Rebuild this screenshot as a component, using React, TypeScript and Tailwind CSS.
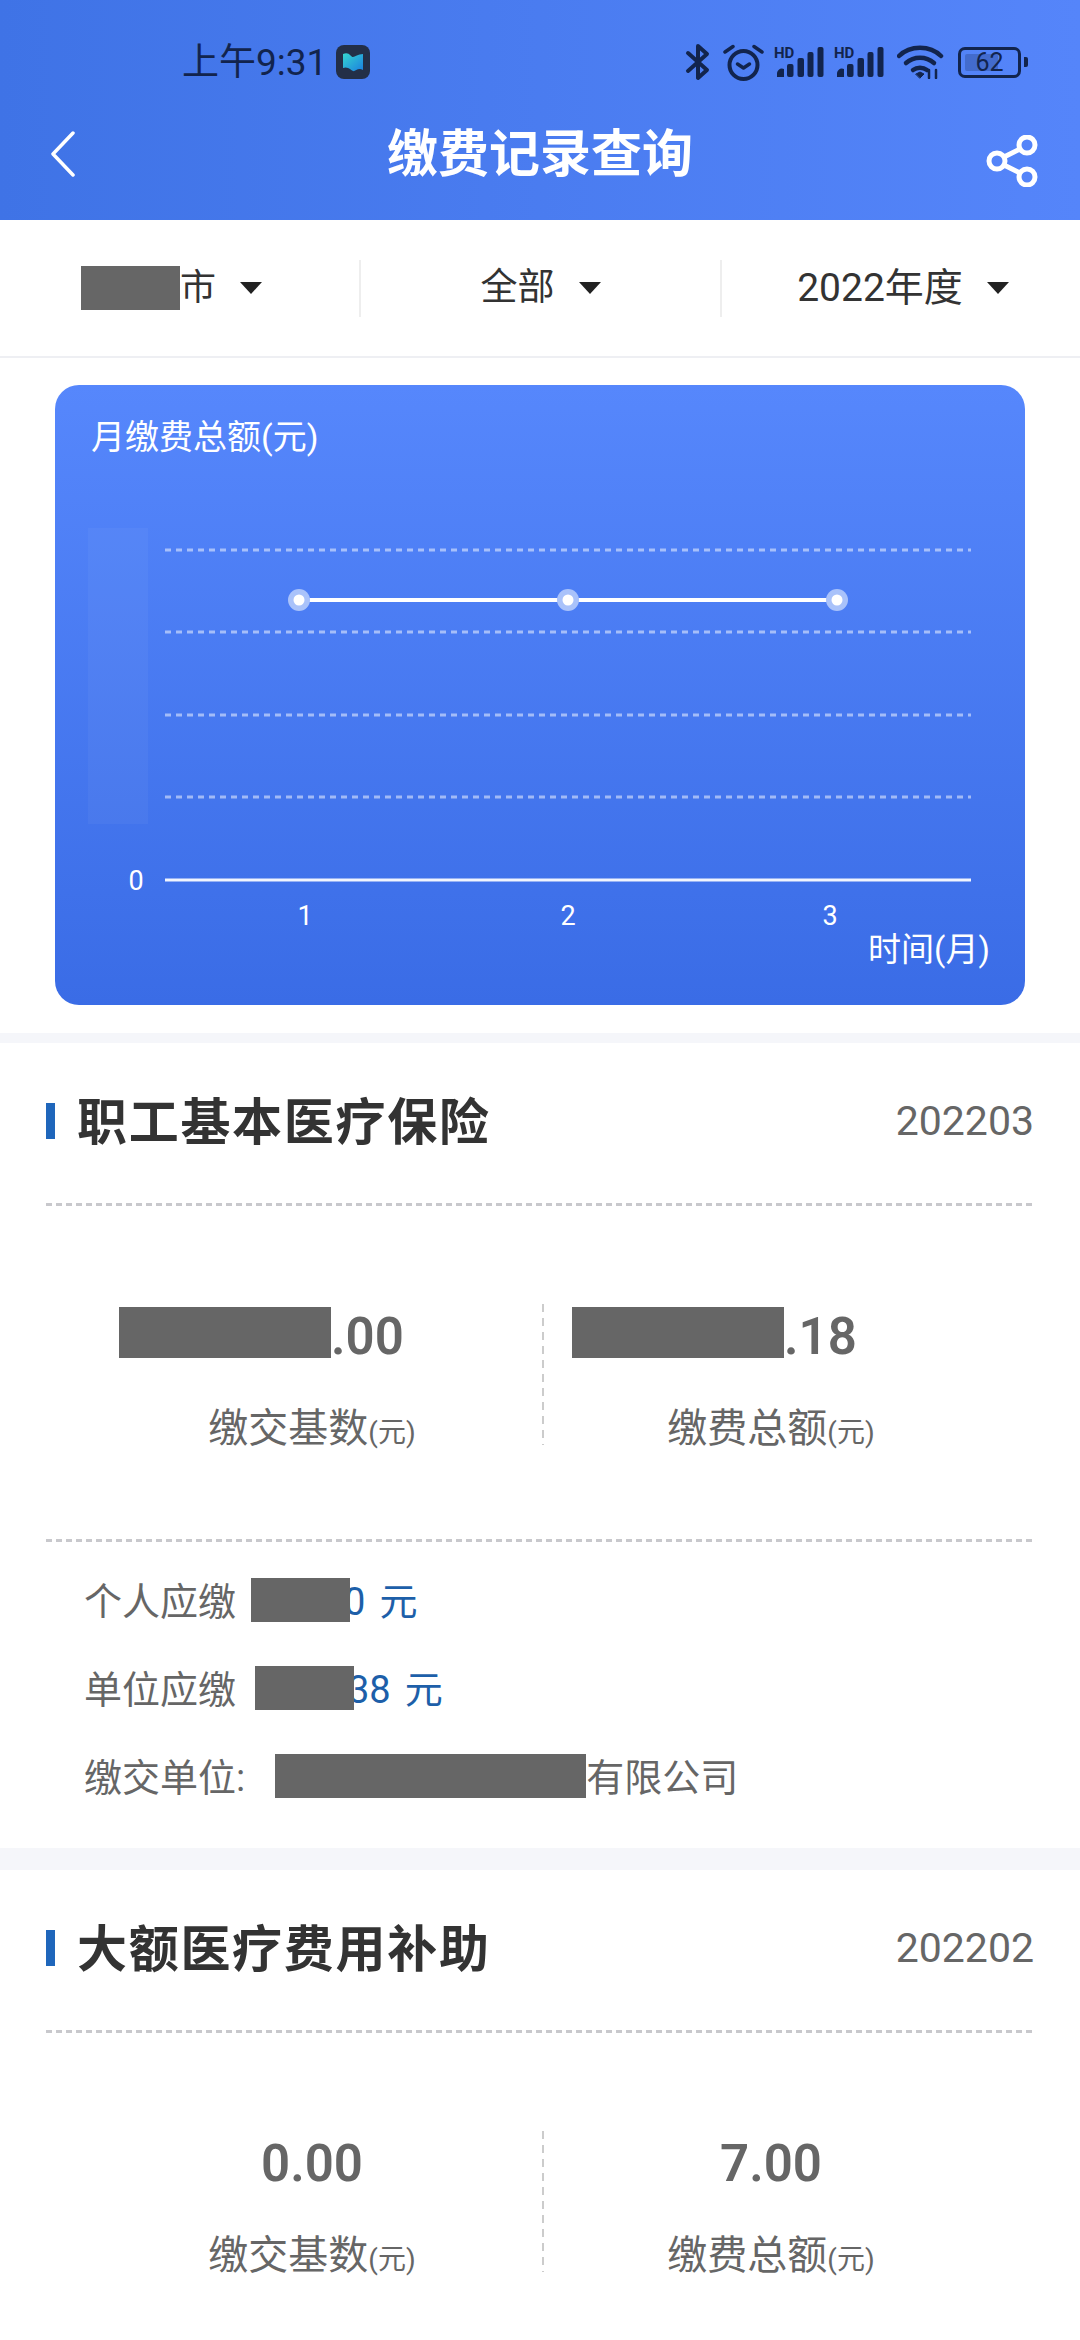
const font = "font-['Roboto','Noto_Sans_CJK_SC',sans-serif]";

function Mask({ className }: { className: string }) {
  return <span className={`relative z-10 block shrink-0 bg-[#666666] ${className}`} />;
}

function DashedLine() {
  return <div className="mx-[46px] h-[3px] w-[989px] bg-[repeating-linear-gradient(to_right,#c8c8cc_0_6px,transparent_6px_10px)]" />;
}

function StatusIcons() {
  const ink = '#12244d';
  const signal = (
    <svg className="-mt-[4px] block" width="50" height="35" viewBox="0 -4 50 35" fill={ink}>
      <text x="0" y="11" fontSize="15" fontWeight="700" fontFamily="Roboto, sans-serif" fill={ink}>HD</text>
      <path d="M3 30v-3a5 5 0 0 1 7-5v8z" />
      <rect x="13" y="17" width="6.5" height="13" rx="2" />
      <rect x="23.5" y="11" width="6.5" height="19" rx="2" />
      <rect x="33.5" y="5" width="6" height="25" rx="2" />
      <rect x="43.5" y="0" width="6" height="30" rx="2" />
    </svg>
  );
  return (
    <div className="ml-auto flex items-center">
      {/* bluetooth */}
      <svg width="25" height="38" viewBox="0 0 25 38" fill="none" stroke={ink} strokeWidth="4" strokeLinejoin="round" strokeLinecap="round">
        <path d="M3 10l19 17-9 8V3l9 8L3 28" />
      </svg>
      {/* alarm */}
      <svg className="ml-[13px]" width="41" height="37" viewBox="0 0 41 37" fill="none" stroke={ink} strokeLinecap="round">
        <circle cx="20.5" cy="21" r="14" strokeWidth="4" />
        <path d="M14.5 20l6 4 6-4" strokeWidth="3.5" strokeLinejoin="round" />
        <path d="M2 8l8-5.5M39 8l-8-5.5" strokeWidth="3.5" />
      </svg>
      <div className="ml-[10px]">{signal}</div>
      <div className="ml-[10px]">{signal}</div>
      {/* wifi */}
      <svg className="ml-[13px]" width="47" height="34" viewBox="0 0 47 34" fill="none" stroke={ink} strokeWidth="4.5" strokeLinecap="round">
        <path d="M2 11C13 0 33 0 44 11" />
        <path d="M9 18c8-7 20-7 28 0" />
        <path d="M16 25c4-3 10-3 14 0" />
        <path d="M19 29l4-2 4 2-4 4z" fill={ink} strokeWidth="1" />
        <path d="M32 25v8M39 25v8" strokeWidth="2.5" />
      </svg>
      {/* battery */}
      <div className="relative ml-[14px] flex h-[31px] w-[63px] items-center justify-center rounded-[7px] border-[3px] border-[#12244d]">
        <div className="absolute inset-y-[4px] left-[4px] w-[33px] rounded-[2px] bg-[#12244d]/25" />
        <span className="relative text-[25px] leading-none text-[#12244d]">62</span>
        <div className="absolute right-[-10px] h-[10px] w-[4px] rounded-r-[2px] bg-[#12244d]" />
      </div>
    </div>
  );
}

function Header() {
  return (
    <header className="h-[220px] bg-gradient-to-r from-[#3f73e6] to-[#5585fa]">
      <div className="box-content flex h-[44px] items-center pl-[182px] pr-[59px] pt-[40px]">
        <span className="text-[37px] leading-none text-[#12244d]">上午9:31</span>
        <svg className="ml-[9px]" width="34" height="34" viewBox="0 0 34 34">
          <defs>
            <linearGradient id="ribbon" x1="0" y1="0" x2="1" y2="1">
              <stop offset="0" stopColor="#35d6cf" />
              <stop offset="1" stopColor="#1b7fe0" />
            </linearGradient>
          </defs>
          <rect width="34" height="34" rx="8" fill="#232f47" />
          <path d="M7 9c6-3 8 3 10 3s5-3 10-3v16c-5-3-8 2-10 1s-5-5-10-3z" fill="url(#ribbon)" />
        </svg>
        <StatusIcons />
      </div>
      <div className="relative flex h-[136px] items-center justify-center pt-[4px]">
        <svg className="absolute left-[50px] top-[47px]" width="26" height="46" viewBox="0 0 26 46" fill="none" stroke="white" strokeWidth="3.5" strokeLinecap="round" strokeLinejoin="round">
          <path d="M23 2L3 23l20 21" />
        </svg>
        <h1 className="text-[51px] font-bold leading-none text-white">缴费记录查询</h1>
        <svg className="absolute left-[986px] top-[51px]" width="52" height="52" viewBox="0 0 52 52" fill="none" stroke="white" strokeWidth="5">
          <circle cx="41" cy="10" r="8" />
          <circle cx="11" cy="26" r="8" />
          <circle cx="41" cy="42" r="8" />
          <path d="M18 22l16-8M18 30l16 8" />
        </svg>
      </div>
    </header>
  );
}

function Caret() {
  return (
    <svg className="ml-[24px]" width="22" height="12" viewBox="0 0 22 12" fill="#222222">
      <path d="M0 0h22L11 12z" />
    </svg>
  );
}

function FilterBar() {
  return (
    <div className="flex h-[138px] items-center border-b-2 border-[#eeeff3]">
      <div className="flex w-[359px] items-center pl-[81px] text-[36px] text-[#333333]">
        <Mask className="h-[44px] w-[99px]" />
        <span>市</span>
        <Caret />
      </div>
      <div className="h-[57px] w-[2px] bg-[#eeeeee]" />
      <div className="flex w-[359px] items-center justify-center text-[37px] text-[#333333]">
        <span>全部</span>
        <Caret />
      </div>
      <div className="h-[57px] w-[2px] bg-[#eeeeee]" />
      <div className="flex flex-1 items-center justify-center pl-[4px] text-[39px] text-[#333333]">
        <span>2022年度</span>
        <Caret />
      </div>
    </div>
  );
}

function Chart() {
  const grid = [94, 176, 259, 341];
  const points = [244, 513, 782];
  return (
    <svg width="970" height="549" viewBox="0 0 970 549" className="block">
      <rect x="33" y="72" width="60" height="296" fill="white" fillOpacity="0.04" />
      {grid.map((y) => (
        <line key={y} x1="110" x2="916" y1={y} y2={y} stroke="white" strokeOpacity="0.5" strokeWidth="3" strokeDasharray="6 5" />
      ))}
      <line x1="110" x2="916" y1="424" y2="424" stroke="white" strokeOpacity="0.92" strokeWidth="3" />
      <line x1="244" x2="782" y1="144" y2="144" stroke="white" strokeWidth="4" />
      {points.map((x) => (
        <g key={x}>
          <circle cx={x} cy="144" r="11" fill="#a9c2fa" />
          <circle cx={x} cy="144" r="5.5" fill="white" />
        </g>
      ))}
      <g fill="white" fontFamily="Roboto, 'Noto Sans CJK SC', sans-serif" fontSize="27" textAnchor="middle">
        <text x="81" y="434">0</text>
        <text x="250" y="469">1</text>
        <text x="513" y="469">2</text>
        <text x="775" y="469">3</text>
        <text x="874" y="505" fontSize="33">时间(月)</text>
      </g>
    </svg>
  );
}

function ChartCard() {
  return (
    <div className="px-[55px] pt-[27px]">
      <div className="h-[620px] w-[970px] rounded-[24px] bg-gradient-to-b from-[#5687fc] to-[#3a6ce6]">
        <div className="h-[71px] pl-[36px] pt-[32px] text-[34px] leading-[40px] text-white">月缴费总额(元)</div>
        <Chart />
      </div>
    </div>
  );
}

interface StatProps {
  value: string;
  label: string;
  widthClass: string;
  maskLeft?: string;
}

function Stat({ value, label, widthClass, maskLeft }: StatProps) {
  return (
    <div className={`flex h-[141px] flex-col ${widthClass}`}>
      <div className={`flex h-[64px] shrink-0 items-center text-[51px] font-semibold leading-none text-[#666666] ${maskLeft ? maskLeft : 'justify-center'}`}>
        {maskLeft && <Mask className="-mt-[7px] h-[51px] w-[212px]" />}
        <span>{value}</span>
      </div>
      <div className="mt-[36px] flex h-[50px] shrink-0 items-center justify-center text-[#666666]">
        <span className="text-[40px] leading-none">{label}</span>
        <span className="mt-[8px] text-[28px] leading-none">(元)</span>
      </div>
    </div>
  );
}

interface SectionProps {
  title: string;
  period: string;
  left: string;
  right: string;
  masked?: boolean;
  children?: React.ReactNode;
}

function Section({ title, period, left, right, masked, children }: SectionProps) {
  return (
    <section className="bg-white">
      <div className="flex h-[160px] items-start px-[46px]">
        <div className="flex h-[156px] w-full items-center">
          <div className="h-[36px] w-[9px] bg-[#1f66bb]" />
          <h2 className="ml-[22px] mt-[3px] text-[50px] font-bold leading-none tracking-[1.7px] text-[#333333]">{title}</h2>
          <span className="ml-auto mt-[1px] text-[41px] leading-none text-[#666666]">{period}</span>
        </div>
      </div>
      <DashedLine />
      <div className="mb-[94px] mt-[98px] flex pl-[82px]">
        <Stat value={left} label="缴交基数" widthClass="w-[460px]" maskLeft={masked ? 'pl-[37px]' : undefined} />
        <div className="h-[141px] w-[2px] bg-[repeating-linear-gradient(to_bottom,#cccccc_0_8px,transparent_8px_14px)]" />
        <Stat value={right} label="缴费总额" widthClass="w-[454px]" maskLeft={masked ? 'pl-[28px]' : undefined} />
      </div>
      {children}
    </section>
  );
}

function PayRow({ label, maskClass, digits }: { label: string; maskClass: string; digits: string }) {
  return (
    <div className="flex h-[88px] items-center text-[38px] text-[#666666]">
      <span>{label}</span>
      <Mask className={`-mt-[5px] h-[44px] w-[99px] ${maskClass}`} />
      <span className="-ml-[6px] text-[#1d5fa9]">{digits}</span>
      <span className="ml-[14px] text-[#1d5fa9]">元</span>
    </div>
  );
}

function Details() {
  return (
    <>
      <DashedLine />
      <div className="pb-[26px] pl-[84px] pr-[85px] pt-[16px]">
        <PayRow label="个人应缴" maskClass="ml-[15px]" digits="0" />
        <PayRow label="单位应缴" maskClass="ml-[19px]" digits="38" />
        <div className="flex h-[88px] items-center text-[38px] text-[#666666]">
          <span>缴交单位:</span>
          <Mask className="-mt-[5px] ml-[30px] h-[44px] w-[311px]" />
          <span>有限公司</span>
        </div>
      </div>
    </>
  );
}

export default function App() {
  return (
    <div className={`h-[2340px] w-[1080px] overflow-hidden bg-white ${font}`}>
      <Header />
      <FilterBar />
      <ChartCard />
      <div className="mt-[28px] h-[10px] bg-[#f5f6fa]" />
      <Section title="职工基本医疗保险" period="202203" left=".00" right=".18" masked>
        <Details />
      </Section>
      <div className="h-[22px] bg-[#f5f6fa]" />
      <Section title="大额医疗费用补助" period="202202" left="0.00" right="7.00" />
    </div>
  );
}
